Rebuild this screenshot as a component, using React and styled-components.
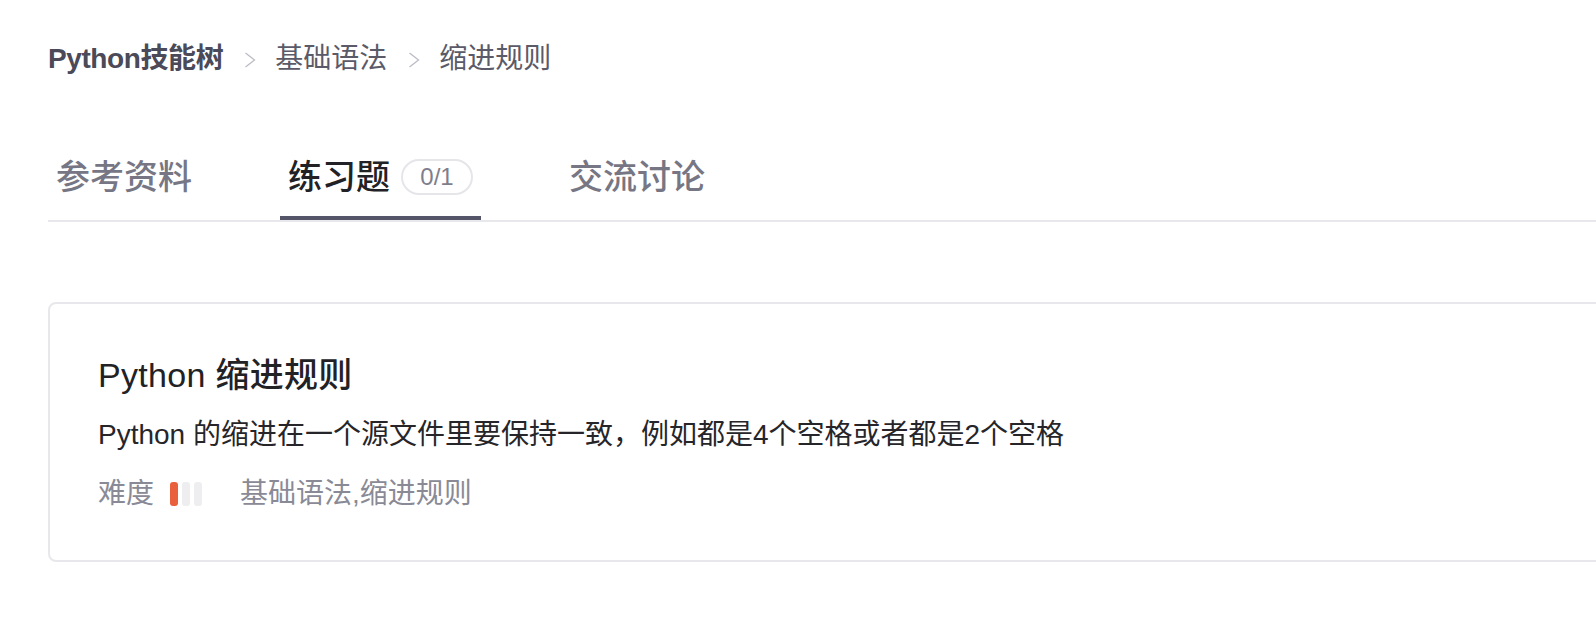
import React from 'react'
import styled, { createGlobalStyle } from 'styled-components'

const GlobalStyle = createGlobalStyle`
  html, body {
    margin: 0;
    padding: 0;
    background: #ffffff;
    overflow: hidden;
  }
  body {
    font-family: "Liberation Sans", "Noto Sans CJK SC", sans-serif;
    color: #222226;
  }
`

const Page = styled.div`
  padding: 39px 0 0 48px;
  overflow: hidden;
`

const Breadcrumb = styled.nav`
  display: flex;
  align-items: center;
  height: 40px;
  font-size: 28px;
  line-height: 40px;
`

const Crumb = styled.span`
  color: ${(p) => (p.root ? '#4a4a58' : '#5a5a68')};
  font-weight: ${(p) => (p.root ? 600 : 400)};
  letter-spacing: ${(p) => (p.root ? '-0.4px' : '0')};
`

const Chevron = styled.svg`
  width: 12px;
  height: 18px;
  margin: 2px 19px 0 21px;
  flex-shrink: 0;
`

const Tabs = styled.div`
  display: flex;
  gap: 80px;
  margin-top: 74px;
  margin-right: -40px;
  border-bottom: 2px solid #e8e8ec;
`

const Tab = styled.div`
  display: flex;
  align-items: center;
  padding: 0 8px 15px;
  border-bottom: 4px solid ${(p) => (p.active ? '#55556a' : 'transparent')};
  font-size: 34px;
  line-height: 48px;
  font-weight: 500;
  color: ${(p) => (p.active ? '#222226' : '#767684')};
`

const Badge = styled.span`
  display: inline-flex;
  align-items: center;
  justify-content: center;
  box-sizing: border-box;
  width: 72px;
  height: 36px;
  margin-left: 11px;
  border: 2px solid #e6e6ea;
  border-radius: 18px;
  font-size: 24px;
  font-weight: 400;
  color: #7e7e8c;
`

const Card = styled.section`
  margin-top: 80px;
  margin-right: -40px;
  padding: 48px 48px 46px;
  border: 2px solid #e8e8ec;
  border-radius: 8px;
`

const Title = styled.h2`
  margin: 0 0 16px;
  font-size: 34px;
  line-height: 46px;
  font-weight: 500;
  letter-spacing: 0.3px;
  color: #222226;
`

const Desc = styled.p`
  margin: 0 0 18px;
  font-size: 28px;
  line-height: 42px;
  color: #26262a;
`

const Meta = styled.div`
  display: flex;
  align-items: center;
  font-size: 28px;
  line-height: 40px;
  color: #8a8a96;
`

const Bars = styled.span`
  display: inline-flex;
  gap: 4px;
  margin: 0 38px 0 16px;
`

const Bar = styled.span`
  width: 8px;
  height: 24px;
  border-radius: 3px;
  background: ${(p) => (p.on ? '#e8603c' : '#eeeef1')};
`

const ChevronIcon = () => (
  <Chevron viewBox="0 0 12 18" fill="none">
    <path d="M1.5 2L10.5 9 1.5 16" stroke="#bcbcc4" strokeWidth="1.3" />
  </Chevron>
)

const App = () => {
  const level = 1
  return (
    <>
      <GlobalStyle />
      <Page>
        <Breadcrumb>
          <Crumb root>Python技能树</Crumb>
          <ChevronIcon />
          <Crumb>基础语法</Crumb>
          <ChevronIcon />
          <Crumb>缩进规则</Crumb>
        </Breadcrumb>

        <Tabs>
          <Tab>参考资料</Tab>
          <Tab active>
            练习题
            <Badge>0/1</Badge>
          </Tab>
          <Tab>交流讨论</Tab>
        </Tabs>

        <Card>
          <Title>Python 缩进规则</Title>
          <Desc>Python 的缩进在一个源文件里要保持一致，例如都是4个空格或者都是2个空格</Desc>
          <Meta>
            难度
            <Bars>
              {[1, 2, 3].map((n) => (
                <Bar key={n} on={n <= level} />
              ))}
            </Bars>
            基础语法,缩进规则
          </Meta>
        </Card>
      </Page>
    </>
  )
}

export default App
